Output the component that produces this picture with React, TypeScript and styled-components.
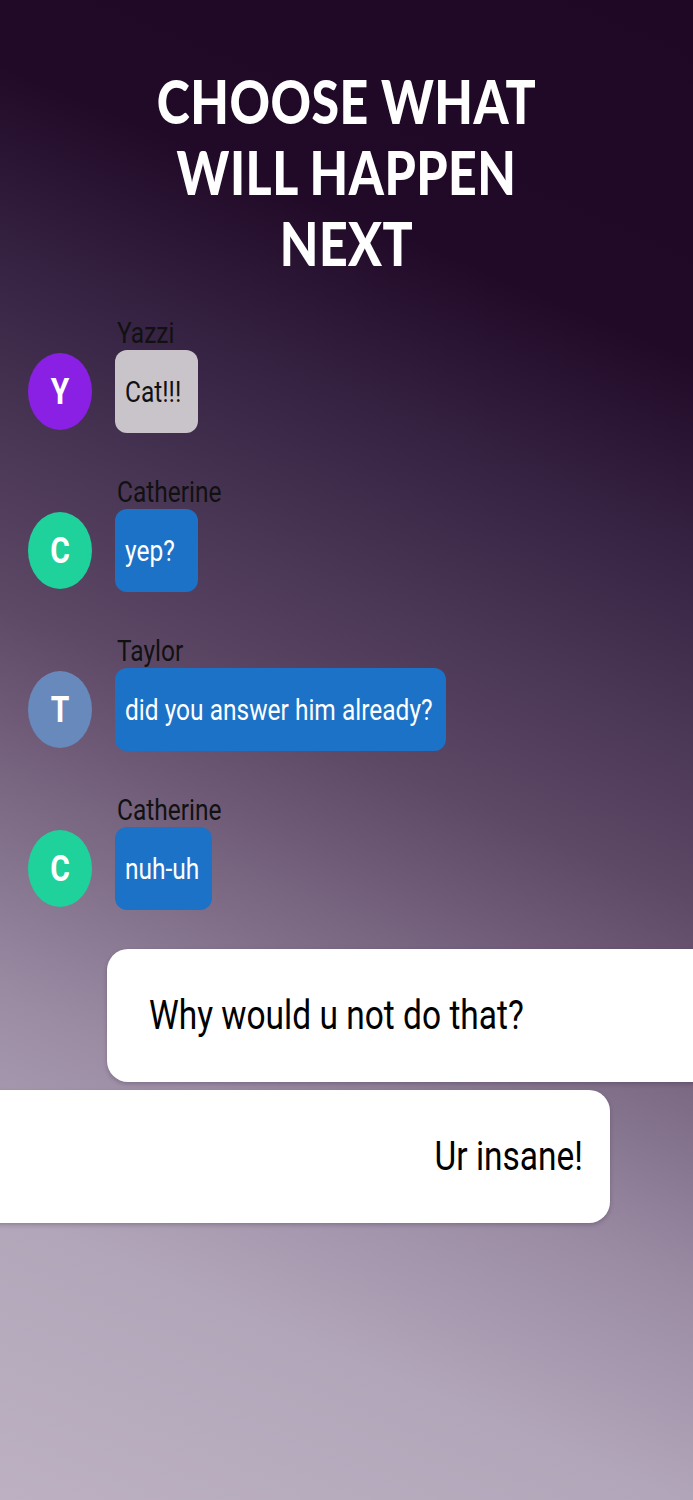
import React from 'react'
import styled, { createGlobalStyle } from 'styled-components'

const GlobalStyle = createGlobalStyle`
  html, body {
    margin: 0;
    padding: 0;
  }
  body {
    font-family: Roboto, 'Liberation Sans', sans-serif;
    overflow-x: hidden;
  }
`

type Message = {
  author: string
  initial: string
  color: string
  text: string
  tone: 'gray' | 'blue'
}

const messages: Message[] = [
  { author: 'Yazzi', initial: 'Y', color: '#8a20e3', text: 'Cat!!!', tone: 'gray' },
  { author: 'Catherine', initial: 'C', color: '#1fd19b', text: 'yep?', tone: 'blue' },
  { author: 'Taylor', initial: 'T', color: '#6889bb', text: 'did you answer him already?', tone: 'blue' },
  { author: 'Catherine', initial: 'C', color: '#1fd19b', text: 'nuh-uh', tone: 'blue' },
]

export default function App() {
  return (
    <>
      <GlobalStyle />
      <Page>
        <Title>
          <TitleLine>CHOOSE WHAT</TitleLine>
          <TitleLine>WILL HAPPEN</TitleLine>
          <TitleLine>NEXT</TitleLine>
        </Title>

        <Thread>
          {messages.map((m, i) => (
            <MessageRow key={i}>
              <Name>
                <Tall>{m.author}</Tall>
              </Name>
              <Avatar $color={m.color}>
                <Tall>{m.initial}</Tall>
              </Avatar>
              <Bubble $tone={m.tone}>
                <Tall>{m.text}</Tall>
              </Bubble>
            </MessageRow>
          ))}
        </Thread>

        <Choices>
          <ChoiceCard $side="right">
            <Tall>Why would u not do that?</Tall>
          </ChoiceCard>
          <ChoiceCard $side="left">
            <Tall>Ur insane!</Tall>
          </ChoiceCard>
        </Choices>
      </Page>
    </>
  )
}

const Page = styled.div`
  min-height: 1500px;
  overflow: hidden;
  background: linear-gradient(
    203deg,
    #1f0826 0%,
    #210a28 20%,
    #3a2747 33%,
    #5d4966 50%,
    #6e5a76 56%,
    #9b8ca4 72%,
    #b2a6ba 84%,
    #bcb0c2 100%
  );
  padding-top: 66px;
  box-sizing: border-box;
`

const Title = styled.h1`
  margin: 0;
  display: flex;
  flex-direction: column;
  align-items: center;
  font-family: Lato, 'Open Sans', sans-serif;
  font-weight: 900;
  font-size: 50px;
  color: #ffffff;
`

const TitleLine = styled.span`
  display: block;
  height: 71px;
  line-height: 71px;
  transform: scaleY(1.22);
  letter-spacing: 0.5px;
`

// the source is vertically stretched, so glyphs are drawn taller than wide
const Tall = styled.span`
  display: inline-block;
  transform: scaleY(1.2);
  white-space: nowrap;
`

const Thread = styled.div`
  display: flex;
  flex-direction: column;
  gap: 42px;
  padding: 37px 0 0 28px;
`

const MessageRow = styled.div`
  display: grid;
  grid-template-columns: 64px auto;
  grid-template-areas:
    '. name'
    'avatar bubble';
  column-gap: 23px;
  justify-content: start;
`

const Name = styled.div`
  grid-area: name;
  height: 34px;
  line-height: 34px;
  padding-left: 2px;
  font-size: 24.5px;
  color: #111;
`

const Avatar = styled.div<{ $color: string }>`
  grid-area: avatar;
  align-self: center;
  width: 64px;
  height: 77px;
  border-radius: 50%;
  background: ${({ $color }) => $color};
  color: #fff;
  font-weight: 700;
  font-size: 30px;
  display: flex;
  align-items: center;
  justify-content: center;
`

const Bubble = styled.div<{ $tone: 'gray' | 'blue' }>`
  grid-area: bubble;
  justify-self: start;
  height: 83px;
  padding: 0 13px 0 10px;
  min-width: 60px;
  border-radius: 12px;
  display: flex;
  align-items: center;
  font-size: 24.5px;
  background: ${({ $tone }) => ($tone === 'gray' ? '#c9c4ca' : '#1c72c7')};
  color: ${({ $tone }) => ($tone === 'gray' ? '#111' : '#fff')};
`

const Choices = styled.div`
  display: flex;
  flex-direction: column;
  gap: 8px;
  margin-top: 39px;
`

const ChoiceCard = styled.div<{ $side: 'left' | 'right' }>`
  height: 133px;
  background: #fff;
  display: flex;
  align-items: center;
  font-size: 33.5px;
  color: #000;
  box-shadow: 0 2px 4px rgba(40, 20, 50, 0.25);
  box-sizing: border-box;
  ${({ $side }) =>
    $side === 'right'
      ? `
    margin-left: 107px;
    margin-right: -40px;
    padding-left: 42px;
    border-radius: 21px 0 0 21px;
    justify-content: flex-start;
  `
      : `
    margin-left: -40px;
    width: 650px;
    padding-right: 27px;
    border-radius: 0 21px 21px 0;
    justify-content: flex-end;
  `}
`
